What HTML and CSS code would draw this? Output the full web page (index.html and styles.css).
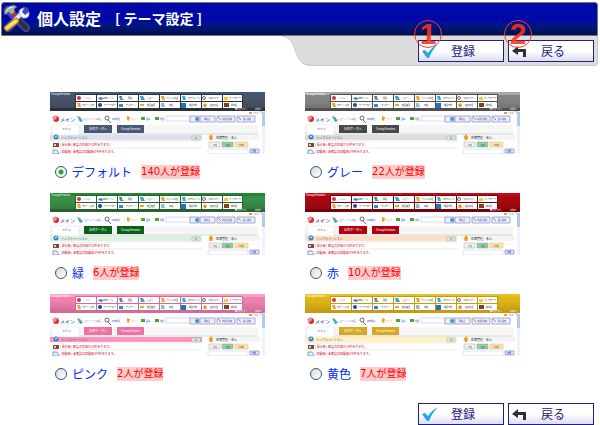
FILE: index.html
```html
<!DOCTYPE html>
<html lang="ja">
<head>
<meta charset="utf-8">
<title>個人設定 [ テーマ設定 ]</title>
<link rel="stylesheet" href="styles.css">
</head>
<body>
<svg class="defs" width="0" height="0" aria-hidden="true">
  <defs>
    <symbol id="check" viewBox="0 0 18 16">
      <path d="M1 8 L4 7 L7 10 Q11 4 17 1 Q11 7 8 15 L6 15 Z" fill="#22a8e8"/>
    </symbol>
    <symbol id="back" viewBox="0 0 18 16">
      <path d="M1 8 L7 3 V6 H15 V14 H12 V9 H7 V12 Z" fill="#303034"/>
    </symbol>
    <linearGradient id="shade" x1="0" y1="0" x2="0" y2="1">
      <stop offset="0" stop-color="#000" stop-opacity="0"/>
      <stop offset="1" stop-color="#000" stop-opacity="0.12"/>
    </linearGradient>

    <!-- Miniature of the portal page, coloured through custom properties -->
    <symbol id="preview" viewBox="0 0 215 62">
      <rect width="215" height="62" fill="#fff"/>
      <rect width="215" height="19" class="p-top"/>
      <rect y="3" width="215" height="13" class="p-mid"/>
      <rect y="7" width="215" height="9" fill="url(#shade)"/>
      <rect y="16" width="215" height="3" class="p-end"/>
      <text x="1" y="3" class="t" fill="#fff">GroupSession</text>

      <rect x="25" y="2" width="168" height="15" class="p-end"/>
      <g fill="#fff">
        <path d="M26 3h20v6h-20zM47 3h20v6h-20zM68 3h20v6h-20zM89 3h20v6h-20zM110 3h20v6h-20zM131 3h20v6h-20zM152 3h20v6h-20zM173 3h19v6h-19z"/>
        <path d="M26 10h20v6h-20zM47 10h20v6h-20zM68 10h20v6h-20zM89 10h20v6h-20zM110 10h20v6h-20zM131 10h20v6h-20zM152 10h20v6h-20zM173 10h19v6h-19z"/>
      </g>
      <circle cx="29" cy="6" r="2" fill="#e03038"/>
      <path d="M48 7l2-2 3 1-1 2z" fill="#3080c8"/>
      <path d="M69 4h3v2l2 2h-4z" fill="#38a0c8"/><circle cx="71" cy="5" r="1" fill="#e04030"/>
      <path d="M90 4h3l2 4h-4z" fill="#40a0c0"/>
      <path d="M111 4h3l1 4h-3z" fill="#f0a028"/>
      <path d="M132 4h3l1 4h-3z" fill="#38a8d8"/>
      <circle cx="154" cy="6" r="1.5" fill="none" stroke="#333" stroke-width=".7"/>
      <path d="M174 5h4v3h-4z" fill="#f8c830"/>
      <path d="M27 11h3l1 4h-3z" fill="#f0a040"/>
      <circle cx="50" cy="13" r="2" fill="#204898"/>
      <path d="M69 12h4v3h-4z" fill="#3888d0"/>
      <path d="M90 12h4v2h-4z" fill="#e0b020"/>
      <path d="M111 11h3l1 4h-4z" fill="#9cb8d0"/>
      <rect x="131" y="11" width="5" height="5" fill="#1878c0"/>
      <path d="M153 13l2-2 2 2-1 2h-2z" fill="#f09010"/>
      <path d="M174 11h5v4h-5z" fill="#804020"/>
      <g class="t menu" fill="#222">
        <text x="34" y="7">メイン</text><text x="53" y="7">WEBメール</text><text x="78" y="7">電話</text><text x="97" y="7">ショート</text>
        <text x="116" y="7">ファイル管理</text><text x="138" y="7">スケジュール</text><text x="158" y="7">プロジェクト</text><text x="179" y="7">ブックマーク</text>
        <text x="32" y="14">サポート案内</text><text x="54" y="14">ワークフロー</text><text x="76" y="14">アンケート</text><text x="97" y="14">安否確認</text>
        <text x="119" y="14">日報</text><text x="139" y="14">施設予約</text><text x="160" y="14">在席管理</text><text x="181" y="14">掲示板</text>
      </g>
      <g class="t menu" fill="#fff"><text x="185" y="18">■ ログアウト</text><text x="205" y="18">admin</text></g>
      <path d="M199 20h3v2h-3z" fill="#e8a020"/>
      <text x="203" y="22" class="t" fill="#3048b0">ヘルプ</text>

      <circle cx="6" cy="27" r="3" fill="#d82c38"/><path d="M2 25l4-2 1 3-3 3z" fill="#f09098"/>
      <text x="10" y="29" class="name">メイン</text>
      <path d="M27 24l3 1 3 4-3 1z" fill="#48a8b8"/>
      <circle cx="57" cy="26" r="2" fill="none" stroke="#445" stroke-width=".8"/><path d="M58 28l3 3" stroke="#445" stroke-width=".8"/>
      <path d="M77 24l3 1-1 4-2-1z" fill="#f0a020"/>
      <path d="M91 25h4v3h-4zM105 25h4v3h-4z" fill="#48a830"/>
      <g class="t menu" fill="#2038d8"><text x="33" y="28">ショートメール着信</text><text x="62" y="28">WEB検索</text><text x="96" y="28">画像</text><text x="110" y="28">地図</text></g>
      <text x="81" y="28" class="t menu" fill="#e89018">ウェブ</text>
      <rect x="116" y="24" width="24" height="5" fill="#fff" stroke="#b0c0d8" stroke-width=".5"/>
      <path d="M140 24h9v6h-9zM150 24h15v6h-15zM167 24h18v6h-18zM187 24h18v6h-18z" fill="#eceffc" stroke="#6c78c0" stroke-width=".6"/>
      <circle cx="147" cy="27" r="2" fill="#4890d8"/>
      <path d="M168 25l3 3M188 25l3 3" stroke="#d07850"/>
      <g class="t menu" fill="#182080"><text x="154" y="28">再読込</text><text x="172" y="28">管理者設定</text><text x="193" y="28">個人設定</text></g>

      <rect y="33" width="208" height="8" fill="#f6f6f6"/>
      <rect y="41" width="208" height="2" fill="#e6e8e8"/>
      <path d="M2 43v-9q0-1 1-1h25q1 0 1 1v9z" fill="#fff" stroke="#ddd" stroke-width=".5"/>
      <rect x="34" y="33" width="28" height="8" class="p-tab"/>
      <rect x="67" y="33" width="27" height="8" class="p-tab"/>
      <text x="12" y="38" class="t" fill="#222">メイン</text>
      <g class="t" fill="#fff"><text x="39" y="38">社内ポータル</text><text x="71" y="38">GroupSession</text></g>

      <rect y="43" width="152" height="5" class="p-info"/>
      <circle cx="6" cy="45" r="2.5" fill="#3888c8"/><path d="M5 45l2-1" stroke="#fff"/>
      <text x="11" y="47" class="t" fill="#555">インフォメーション</text>
      <rect x="142" y="44" width="8" height="4" fill="#e8f4e8" stroke="#88b088" stroke-width=".5"/>
      <text x="144" y="47" class="t menu" fill="#388838">設定</text>
      <path d="M0 49h152M0 56h152" stroke="#ddd" stroke-width=".6"/>
      <rect x="3" y="51" width="6" height="4" fill="#804838"/><path d="M4 52h2v2H4z" fill="#f0c8a0"/>
      <path d="M3 58h4l2 4H3z" fill="#e8f0ff" stroke="#4878c0" stroke-width=".7"/>
      <g class="t" fill="#d01030"><text x="10" y="54">[ 掲示板 ] 新着の投稿が10件あります。</text><text x="10" y="61">[ 回覧板 ] 未確認の回覧板が9件あります。</text></g>

      <rect x="157" y="43" width="53" height="5" fill="#f4f4f4"/>
      <path d="M161 42l2 3-1 3h-2l-1-3z" fill="#f09818"/>
      <text x="166" y="47" class="t" fill="#222">在席管理・本人</text>
      <path d="M159 50h11v5h-11z" fill="#f2f2f2" stroke="#aaa" stroke-width=".5"/>
      <path d="M172 50h11v5h-11z" fill="#90d0a0" stroke="#80a888" stroke-width=".5"/>
      <path d="M185 50h13v5h-13z" fill="#ffe4a8" stroke="#d0b880" stroke-width=".5"/>
      <g class="t menu" fill="#444"><text x="161" y="54">○不在</text><text x="174" y="54">○在席</text><text x="186" y="54">○その他</text></g>
      <path d="M158 57h40v5h-40z" fill="#fff" stroke="#b8c8e0" stroke-width=".5"/>
      <path d="M200 57h9v4h-9z" fill="#e0e4ff" stroke="#7078c0" stroke-width=".6"/>
      <text x="202" y="60" class="t menu" fill="#182080">変更</text>
      <rect x="212" y="19" width="3" height="43" fill="#eef2fc"/>
      <rect x="212" y="20" width="3" height="14" fill="#b4c8f4"/>
    </symbol>
  </defs>
</svg>

<header>
  <div class="titlebar">
    <svg class="tools" viewBox="0 0 28 28" aria-hidden="true">
      <g stroke="#a8b8f0" stroke-opacity=".35" stroke-width="8" stroke-linecap="round"><path d="M6 6l18 18M23 7L6 24"/></g>
      <path d="M9 7l9 11" stroke="#c03028" stroke-width="4"/>
      <path d="M16 15l8 9" stroke="#30303c" stroke-width="5" stroke-linecap="round"/>
      <path d="M2 8Q4 2 12 1l3 2-3 2 1 3-4 3-2-3-4 3z" fill="#a8b0a8" stroke="#505858" stroke-width=".8"/>
      <path d="M4 7q3-4 7-4" stroke="#eef2ee" fill="none"/>
      <path d="M12 17l8-8" stroke="#e4e8ee" stroke-width="4"/>
      <path d="M18 11q-3-6 4-7l-2 4 3 3 4-3q1 7-6 6z" fill="#f4f6fa" stroke="#a0a8b8" stroke-width=".7"/>
      <path d="M5 24l9-7" stroke="#b07818" stroke-width="6" stroke-linecap="round"/>
      <path d="M5 24l9-7" stroke="#ffd850" stroke-width="4" stroke-linecap="round"/>
      <path d="M5 23l8-6" stroke="#fff4b0"/>
    </svg>
    <h1>個人設定</h1>
    <h2>[ テーマ設定 ]</h2>
  </div>
  <div class="toolbar">
    <svg class="curve" viewBox="0 0 28 30" aria-hidden="true">
      <path d="M0 0H28V30C19 30 16 22 13 14C11 6 7 1 0 0Z" fill="#ddd"/>
      <path d="M0 0C7 1 11 6 13 14C16 22 19 29 28 29" fill="none" stroke="#c8c8c8"/>
    </svg>
    <div class="actions panel">
      <div class="marked"><button type="submit" form="themes"><svg><use href="#check"/></svg><span>登録</span></button><b class="badge">1</b></div>
      <div class="marked"><button type="button"><svg><use href="#back"/></svg><span>戻る</span></button><b class="badge">2</b></div>
    </div>
  </div>
</header>

<form id="themes">
  <main class="themes">
    <section class="theme default">
      <svg class="shot" viewBox="0 0 215 62"><use href="#preview"/></svg>
      <div class="choice"><input type="radio" name="theme" id="t1" checked><label for="t1">デフォルト</label><mark>140人が登録</mark></div>
    </section>
    <section class="theme gray">
      <svg class="shot" viewBox="0 0 215 62"><use href="#preview"/></svg>
      <div class="choice"><input type="radio" name="theme" id="t2"><label for="t2">グレー</label><mark>22人が登録</mark></div>
    </section>
    <section class="theme green">
      <svg class="shot" viewBox="0 0 215 62"><use href="#preview"/></svg>
      <div class="choice"><input type="radio" name="theme" id="t3"><label for="t3">緑</label><mark>6人が登録</mark></div>
    </section>
    <section class="theme red">
      <svg class="shot" viewBox="0 0 215 62"><use href="#preview"/></svg>
      <div class="choice"><input type="radio" name="theme" id="t4"><label for="t4">赤</label><mark>10人が登録</mark></div>
    </section>
    <section class="theme pink">
      <svg class="shot" viewBox="0 0 215 62"><use href="#preview"/></svg>
      <div class="choice"><input type="radio" name="theme" id="t5"><label for="t5">ピンク</label><mark>2人が登録</mark></div>
    </section>
    <section class="theme yellow">
      <svg class="shot" viewBox="0 0 215 62"><use href="#preview"/></svg>
      <div class="choice"><input type="radio" name="theme" id="t6"><label for="t6">黄色</label><mark>7人が登録</mark></div>
    </section>
  </main>
  <footer class="actions">
    <button type="submit"><svg><use href="#check"/></svg><span>登録</span></button>
    <button type="button"><svg><use href="#back"/></svg><span>戻る</span></button>
  </footer>
</form>
</body>
</html>
```

FILE: styles.css
```css
* { box-sizing: border-box; }

body {
  margin: 0;
  background: #fff;
  font-family: "DejaVu Sans", "Noto Sans CJK JP", sans-serif;
}

.defs { position: absolute; }

header { padding: 2px 2px 0 1px; }

.titlebar {
  display: flex;
  align-items: center;
  height: 34px;
  padding-bottom: 2px;
  border: 1px solid #70747c;
  border-radius: 3px 3px 0 0;
  background: linear-gradient(#0008a8 0, #0008a8 60%, #001888 64%, #001050 100%);
  color: #fff;
}

.tools { width: 28px; height: 28px; fill: none; }

h1, h2 {
  margin: 0;
  font-family: "Noto Sans CJK JP", sans-serif;
  font-weight: 700;
  line-height: 20px;
}
h1 { margin-left: 7px; font-size: 16px; }
h2 { margin-left: 14px; font-size: 14px; }

.toolbar {
  display: flex;
  width: 53%;
  margin-left: auto;
}
.curve { flex: none; width: 28px; height: 30px; }

.actions {
  display: flex;
  justify-content: flex-end;
  gap: 4px;
}
.panel {
  flex: 1;
  height: 30px;
  padding: 4px 3px 0 0;
  background: #ddd;
  border-bottom: 1px solid #c8c8c8;
  border-right: 1px solid #c8c8c8;
  border-radius: 0 0 4px 0;
}
.marked { position: relative; }

button {
  display: flex;
  align-items: center;
  width: 86px;
  height: 22px;
  padding: 0 2px;
  border: 1px solid #20207c;
  border-radius: 0;
  background: linear-gradient(#fff 0, #fff 50%, #dcdcf4 100%);
  color: #20207c;
  font-family: "Noto Sans CJK JP", sans-serif;
  font-size: 12px;
  line-height: 16px;
}
button svg { flex: none; width: 18px; height: 16px; }
button span { flex: 1; padding-right: 14px; text-align: center; }

.badge {
  position: absolute;
  left: -4px;
  top: -20px;
  width: 28px;
  height: 28px;
  border: 1px solid #f04030;
  border-radius: 50%;
  color: rgba(255, 48, 20, 0.88);
  font: 700 30px/26px "Liberation Sans", sans-serif;
  text-align: center;
  pointer-events: none;
}

.themes {
  display: grid;
  grid-template-columns: 1fr 1fr;
  gap: 13px 40px;
  padding: 26px 80px 21px 50px;
}
.shot { display: block; width: 100%; }

.choice {
  display: flex;
  align-items: center;
  height: 16px;
  margin-top: 10px;
  padding-left: 5px;
}
.choice input {
  appearance: none;
  width: 12px;
  height: 12px;
  margin: 0 5px 0 0;
  border: 1px solid #305888;
  border-radius: 50%;
  background: linear-gradient(135deg, #d8d8d4, #fff);
}
.choice input:checked {
  background: radial-gradient(circle, #20a820 0, #30a830 2px, #f4f4f2 3px);
}
.choice label {
  color: #0028f8;
  font-family: "Noto Sans CJK JP", sans-serif;
  font-size: 12px;
  line-height: 16px;
}
.choice mark {
  margin-left: 9px;
  background: #ffcccc;
  color: #f00;
  font-size: 10px;
  line-height: 14px;
}

footer.actions { padding-right: 6px; }

/* Preview palette */
.p-top { fill: var(--top); }
.p-mid { fill: var(--mid); }
.p-end { fill: var(--end); }
.p-tab { fill: var(--tab); }
.p-info { fill: var(--info); }
.t { font-family: "Noto Sans CJK JP", sans-serif; font-size: 3px; }
.menu { font-size: 2px; }
.name { font-family: "Noto Sans CJK JP", sans-serif; font-size: 5px; fill: #102080; }

.default { --top: #405878; --mid: #485468; --end: #2c3038; --tab: #485878; --info: #dce0ec; }
.gray { --top: #a8a8a8; --mid: #848484; --end: #505050; --tab: #484848; --info: #dcdcdc; }
.green { --top: #208830; --mid: #389048; --end: #286030; --tab: #086018; --info: #dcf0e0; }
.red { --top: #c80818; --mid: #a80810; --end: #780008; --tab: #b00010; --info: #ffdcc4; }
.pink { --top: #f8a0c8; --mid: #f080b0; --end: #d86898; --tab: #f070a0; --info: #f898c0; }
.yellow { --top: #e8c020; --mid: #e0b418; --end: #c89c10; --tab: #d8a820; --info: #fff0c0; }
```
